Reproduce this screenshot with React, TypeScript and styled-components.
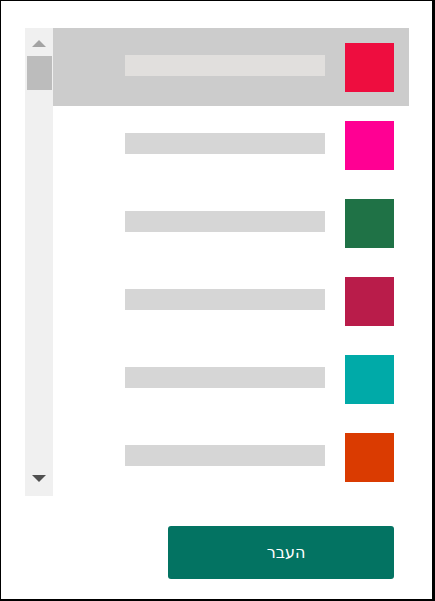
import React from "react";
import styled, { createGlobalStyle } from "styled-components";

const colors = ["#ee0d3f", "#ff0093", "#1f7246", "#b91c4a", "#00aaa8", "#da3b01"];

const GlobalStyle = createGlobalStyle`
    html, body {
        margin: 0;
        padding: 0;
        background: #fff;
    }
`;

const App = () => {
    const selected = 0;

    return (
        <>
            <GlobalStyle />
            <Frame>
                <ListWrapper>
                    <ScrollBar>
                        <Arrow $up />
                        <Thumb />
                        <Track />
                        <Arrow />
                    </ScrollBar>
                    <List>
                        {colors.map((color, index) => (
                            <Row key={color} $selected={index === selected}>
                                <NameBar $selected={index === selected} />
                                <Swatch $color={color} />
                            </Row>
                        ))}
                    </List>
                </ListWrapper>
                <Footer>
                    <ApplyButton dir="rtl">העבר</ApplyButton>
                </Footer>
            </Frame>
        </>
    );
};

export default App;

const Frame = styled.div`
    box-sizing: border-box;
    width: 435px;
    height: 601px;
    border: 1px solid #000;
    border-right-width: 3px;
    border-bottom-width: 2px;
    padding: 27px 23px 0 24px;
    display: flex;
    flex-direction: column;
`;

const ListWrapper = styled.div`
    display: flex;
    height: 468px;
`;

const ScrollBar = styled.div`
    width: 28px;
    background-color: #f0f0f0;
    display: flex;
    flex-direction: column;
    align-items: center;
`;

const Arrow = styled.div<{ $up?: boolean }>`
    width: 0;
    height: 0;
    border-left: 7px solid transparent;
    border-right: 7px solid transparent;
    ${(p) =>
        p.$up
            ? "border-bottom: 7px solid #a3a3a3; margin: 12px 0 9px;"
            : "border-top: 7px solid #505050; margin: 11px 0 14px;"}
`;

const Thumb = styled.div`
    width: 25px;
    height: 34px;
    margin-left: 1px;
    background-color: #bcbcbc;
`;

const Track = styled.div`
    flex: 1;
`;

const List = styled.div`
    flex: 1;
    display: flex;
    flex-direction: column;
`;

const Row = styled.div<{ $selected: boolean }>`
    height: 78px;
    display: flex;
    align-items: center;
    justify-content: flex-end;
    gap: 20px;
    padding-right: 15px;
    background-color: ${(p) => (p.$selected ? "#cccccc" : "#fff")};
`;

const NameBar = styled.div<{ $selected: boolean }>`
    width: 200px;
    height: 21px;
    margin-top: -3px;
    background-color: ${(p) => (p.$selected ? "#e1dfdd" : "#d6d6d6")};
`;

const Swatch = styled.div<{ $color: string }>`
    width: 49px;
    height: 49px;
    background-color: ${(p) => p.$color};
`;

const Footer = styled.div`
    display: flex;
    justify-content: flex-end;
    padding: 30px 15px 0 0;
`;

const ApplyButton = styled.button`
    width: 226px;
    height: 53px;
    border: none;
    border-radius: 3px;
    background-color: #037362;
    color: #fff;
    font-family: "DejaVu Sans", "Liberation Sans", sans-serif;
    font-size: 16px;
    padding: 0 0 0 10px;
    cursor: pointer;
`;
